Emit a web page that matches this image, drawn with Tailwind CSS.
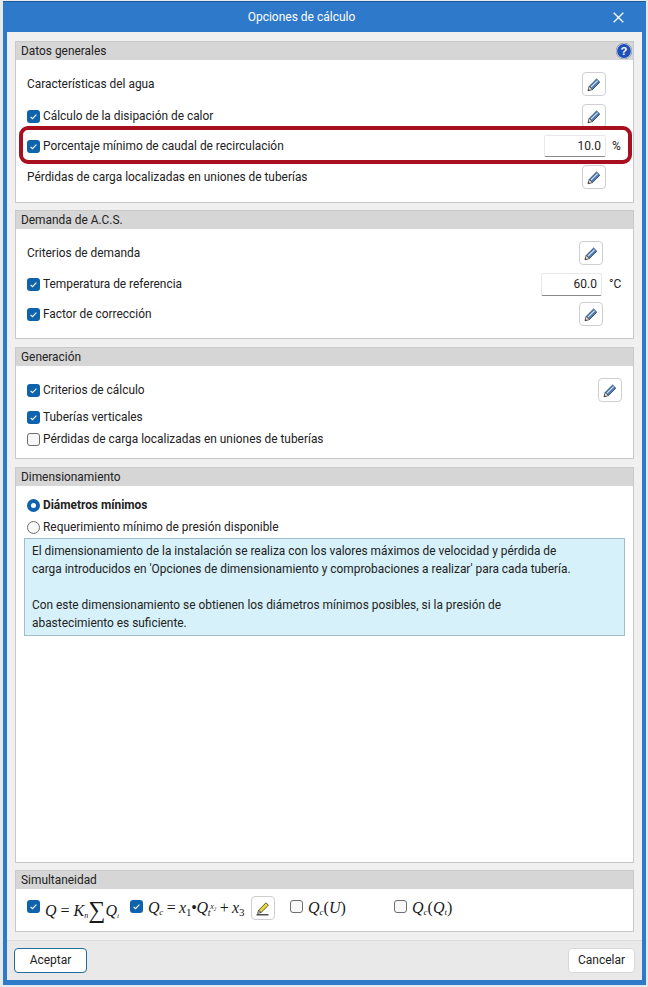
<!doctype html>
<html lang="es">
<head>
<meta charset="utf-8">
<script src="https://cdn.jsdelivr.net/npm/@tailwindcss/browser@4"></script>
<title>Opciones de cálculo</title>
</head>
<body class="bg-[#e6eaee] font-['Roboto',sans-serif] text-[11.9px] leading-[19px] text-[#222222]">
<svg class="hidden" width="0" height="0">
  <symbol id="pencil" viewBox="0 0 16 16">
    <path d="M3.2 10.4 10.6 3l3.2 3.2-7.4 7.4z" fill="#4f79b0" stroke="#2c4f78" stroke-width=".9"/>
    <path d="M5 11.2 11.6 4.6" stroke="#dbe6f2" stroke-width="1.1" fill="none"/>
    <path d="M3.2 10.4 2 14.8l4.4-1.2z" fill="#f2eee6" stroke="#4a4a4a" stroke-width=".9"/>
    <path d="M2 14.8l.5-1.9 1.4 1.4z" fill="#333"/>
  </symbol>
  <symbol id="check" viewBox="0 0 13 13">
    <rect width="13" height="13" rx="3" fill="#0f62ac"/>
    <path d="M3.6 6.9 5.5 8.7 9.4 4.6" stroke="#fff" stroke-width="1.1" fill="none"/>
  </symbol>
</svg>

<div class="pt-px pl-[3px] h-[987px] w-[648px]">
  <div class="relative w-[643px] h-[984px] bg-[#2f79cb] border-t border-[#1d5a9e] px-[4px] pb-[5px] flex flex-col">
    <!-- title bar -->
    <div class="relative h-[30px] shrink-0 flex items-center justify-center pr-[46px] text-white text-[12px]">
      <span>Opciones de cálculo</span>
      <svg class="absolute right-[18px] top-[10px]" width="11" height="11" viewBox="0 0 11 11"><path d="M.7.7l9.6 9.6M10.3.7.7 10.3" stroke="#fff" stroke-width="1.3"/></svg>
    </div>

    <!-- client area -->
    <div class="flex-1 bg-[#f0f0f0] pt-[9px] flex flex-col">
      <div class="mx-[8px] flex flex-col">

        <!-- Datos generales -->
        <section class="relative h-[162px] bg-white border border-[#c9c9c9] flex flex-col">
          <header class="h-[18px] bg-[#d6d6d6] pl-[5px] flex items-center justify-between">
            <span>Datos generales</span>
            <svg class="mr-[1px]" width="16" height="16" viewBox="0 0 15 15"><circle cx="7.5" cy="7.5" r="7" fill="#1f50b8" stroke="#dfe6f5" stroke-width="1"/><circle cx="7.5" cy="7.5" r="7.4" fill="none" stroke="#5a6a8a" stroke-width=".5"/><text x="7.5" y="11.2" text-anchor="middle" font-size="10.5" font-weight="700" fill="#fff" font-family="Liberation Sans">?</text></svg>
          </header>
          <div class="flex flex-col pl-[11px] pr-[27px]">
            <div class="mt-[12px] h-[24px] flex items-center justify-between">
              <span>Características del agua</span>
              <button class="w-[24px] h-[24px] bg-white border border-[#cfcfcf] rounded-[4px] flex items-center justify-center"><svg width="16" height="16"><use href="#pencil"/></svg></button>
            </div>
            <div class="mt-[8px] h-[24px] flex items-center justify-between">
              <span class="flex items-center gap-[3px]"><svg width="13" height="13"><use href="#check"/></svg>Cálculo de la disipación de calor</span>
              <button class="w-[24px] h-[24px] bg-white border border-[#cfcfcf] rounded-[4px] flex items-center justify-center"><svg width="16" height="16"><use href="#pencil"/></svg></button>
            </div>
            <div class="mt-[6px] h-[24px] flex items-center justify-between -mr-[17px]">
              <span class="flex items-center gap-[3px]"><svg width="13" height="13"><use href="#check"/></svg>Porcentaje mínimo de caudal de recirculación</span>
              <span class="flex items-center">
                <span class="w-[62px] h-[22px] bg-white border border-[#e8e8e8] border-b-[#8a8a8a] rounded-[2px] flex items-center justify-end pr-[4px] text-[12px]">10.0</span>
                <span class="w-[17px] pl-[6px] text-[12px]">%</span>
              </span>
            </div>
            <div class="mt-[7px] h-[24px] flex items-center justify-between">
              <span>Pérdidas de carga localizadas en uniones de tuberías</span>
              <button class="w-[24px] h-[24px] bg-white border border-[#cfcfcf] rounded-[4px] flex items-center justify-center"><svg width="16" height="16"><use href="#pencil"/></svg></button>
            </div>
          </div>
          <div class="absolute left-[3px] top-[84px] w-[613px] h-[38px] border-[4px] border-[#a80f1f] rounded-[9px]"></div>
        </section>

        <!-- Demanda -->
        <section class="mt-[7px] h-[129px] bg-white border border-[#c9c9c9] flex flex-col">
          <header class="h-[18px] bg-[#d6d6d6] pl-[5px] flex items-center">Demanda de A.C.S.</header>
          <div class="flex flex-col pl-[11px] pr-[30px]">
            <div class="mt-[12px] h-[24px] flex items-center justify-between">
              <span>Criterios de demanda</span>
              <button class="w-[24px] h-[24px] bg-white border border-[#cfcfcf] rounded-[4px] flex items-center justify-center"><svg width="16" height="16"><use href="#pencil"/></svg></button>
            </div>
            <div class="mt-[7px] h-[24px] flex items-center justify-between -mr-[19px]">
              <span class="flex items-center gap-[3px]"><svg width="13" height="13"><use href="#check"/></svg>Temperatura de referencia</span>
              <span class="flex items-center">
                <span class="w-[61px] h-[23px] bg-white border border-[#e8e8e8] border-b-[#8a8a8a] rounded-[2px] flex items-center justify-end pr-[4px] text-[12px]">60.0</span>
                <span class="w-[20px] pl-[7px] text-[12px]">°C</span>
              </span>
            </div>
            <div class="mt-[6px] h-[24px] flex items-center justify-between">
              <span class="flex items-center gap-[3px]"><svg width="13" height="13"><use href="#check"/></svg>Factor de corrección</span>
              <button class="w-[24px] h-[24px] bg-white border border-[#cfcfcf] rounded-[4px] flex items-center justify-center"><svg width="16" height="16"><use href="#pencil"/></svg></button>
            </div>
          </div>
        </section>

        <!-- Generación -->
        <section class="mt-[8px] h-[112px] bg-white border border-[#c9c9c9] flex flex-col">
          <header class="h-[18px] bg-[#d6d6d6] pl-[5px] flex items-center">Generación</header>
          <div class="flex flex-col pl-[11px] pr-[11px]">
            <div class="mt-[12px] h-[24px] flex items-center justify-between">
              <span class="flex items-center gap-[3px]"><svg width="13" height="13"><use href="#check"/></svg>Criterios de cálculo</span>
              <button class="w-[24px] h-[24px] bg-white border border-[#cfcfcf] rounded-[4px] flex items-center justify-center"><svg width="16" height="16"><use href="#pencil"/></svg></button>
            </div>
            <div class="mt-[8px] h-[14px] flex items-center">
              <span class="flex items-center gap-[3px]"><svg width="13" height="13"><use href="#check"/></svg>Tuberías verticales</span>
            </div>
            <div class="mt-[8px] h-[14px] flex items-center gap-[3px]">
              <span class="w-[13px] h-[13px] bg-[#f8f8f8] border border-[#6e6e6e] rounded-[3px]"></span>
              <span>Pérdidas de carga localizadas en uniones de tuberías</span>
            </div>
          </div>
        </section>

        <!-- Dimensionamiento -->
        <section class="mt-[8px] h-[396px] bg-white border border-[#c9c9c9] flex flex-col">
          <header class="h-[18px] bg-[#d6d6d6] pl-[5px] flex items-center">Dimensionamiento</header>
          <div class="flex flex-col">
            <div class="mt-[12px] ml-[11px] h-[14px] flex items-center gap-[3px] font-bold">
              <span class="w-[13px] h-[13px] rounded-full border-[4px] border-[#0f62ac] bg-white"></span>
              <span>Diámetros mínimos</span>
            </div>
            <div class="mt-[8px] ml-[11px] h-[14px] flex items-center gap-[3px]">
              <span class="w-[13px] h-[13px] rounded-full border border-[#6e6e6e] bg-[#f8f8f8]"></span>
              <span>Requerimiento mínimo de presión disponible</span>
            </div>
            <div class="mt-[4px] mx-[8px] h-[98px] bg-[#d6f1f9] border border-[#a4bcc8] pl-[7px] pt-[3px] leading-[18px]">
              <p>El dimensionamiento de la instalación se realiza con los valores máximos de velocidad y pérdida de</p>
              <p>carga introducidos en 'Opciones de dimensionamiento y comprobaciones a realizar' para cada tubería.</p>
              <p class="mt-[18px]">Con este dimensionamiento se obtienen los diámetros mínimos posibles, si la presión de</p>
              <p>abastecimiento es suficiente.</p>
            </div>
          </div>
        </section>

        <!-- Simultaneidad -->
        <section class="mt-[7px] h-[62px] bg-white border border-[#c9c9c9] flex flex-col">
          <header class="h-[18px] bg-[#d6d6d6] pl-[5px] flex items-center">Simultaneidad</header>
          <div class="relative flex-1 font-['Liberation_Serif',serif] italic text-[16px] text-[#1a1a1a]">
            <div class="flex items-start pt-[8px] pl-[11px] h-full">
              <svg class="mt-[3px] shrink-0" width="13" height="13"><use href="#check"/></svg>
              <span class="ml-[5px] mt-[1px] w-[72px] whitespace-nowrap leading-[20px]">Q <span class="not-italic">=</span> K<sub class="text-[8px]">n</sub><span class="not-italic text-[24px] leading-none align-[-2px]">∑</span>Q<sub class="text-[7px]">i</sub></span>
              <svg class="ml-[13px] mt-[3px] shrink-0" width="13" height="13"><use href="#check"/></svg>
              <span class="ml-[5px] mt-[1px] w-[103px] whitespace-nowrap leading-[20px] tracking-[-0.3px]">Q<sub class="text-[9px]">c</sub> <span class="not-italic">=</span> x<sub class="not-italic text-[11px]">1</sub><span class="not-italic">•</span>Q<sub class="text-[10px]">t</sub><sup class="text-[8px]">x₂</sup> <span class="not-italic">+</span> x<sub class="not-italic text-[11px]">3</sub></span>
              <button class="-mt-[1px] w-[24px] h-[24px] bg-white border border-[#cfcfcf] rounded-[4px] flex items-center justify-center shrink-0">
                <svg width="16" height="16" viewBox="0 0 16 16"><path d="M3.6 10.2 11 2.8l2.4 2.4L6 12.6z" fill="#e8d640" stroke="#4a4a20" stroke-width=".9"/><path d="M3.6 10.2 2.6 13.4 6 12.6z" fill="#f4f0d0" stroke="#333" stroke-width=".8"/><path d="M1.5 14.8h12" stroke="#222" stroke-width="1.2"/></svg>
              </button>
              <span class="ml-[15px] mt-[3px] shrink-0 w-[13px] h-[13px] bg-[#f8f8f8] border border-[#6e6e6e] rounded-[3px]"></span>
              <span class="ml-[5px] mt-[1px] w-[86px] whitespace-nowrap leading-[20px]">Q<sub class="text-[9px]">c</sub><span class="not-italic">(</span>U<span class="not-italic">)</span></span>
              <span class="mt-[3px] shrink-0 w-[13px] h-[13px] bg-[#f8f8f8] border border-[#6e6e6e] rounded-[3px]"></span>
              <span class="ml-[5px] mt-[1px] whitespace-nowrap leading-[20px]">Q<sub class="text-[9px]">c</sub><span class="not-italic">(</span>Q<sub class="text-[9px]">t</sub><span class="not-italic">)</span></span>
            </div>
          </div>
        </section>
      </div>

      <!-- footer -->
      <div class="mt-[8px] border-t border-[#dcdcdc] bg-[#e9e9e9] flex-1 px-[7px] pt-[7px] flex justify-between">
        <button class="w-[73px] h-[25px] bg-white border border-[#1f6f9e] rounded-[4px] text-center text-[12px]">Aceptar</button>
        <button class="w-[67px] h-[25px] bg-white border border-[#d8d8d8] rounded-[4px] text-center text-[12px]">Cancelar</button>
      </div>
    </div>
  </div>
</div>
</body>
</html>
